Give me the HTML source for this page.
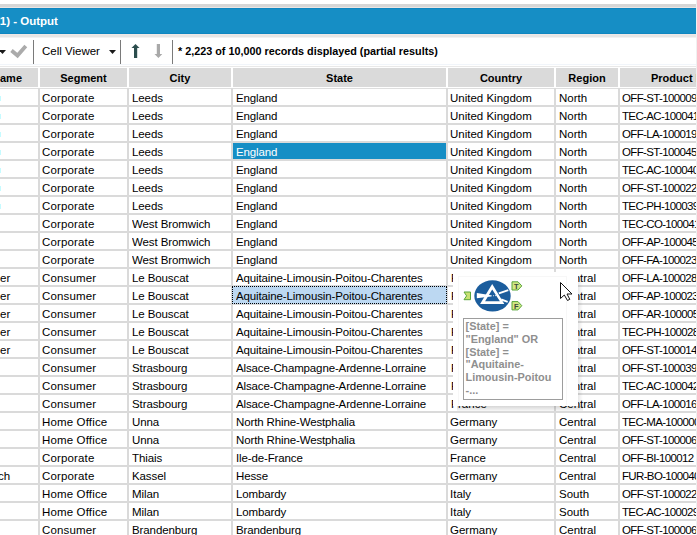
<!DOCTYPE html><html><head><meta charset="utf-8"><style>
*{margin:0;padding:0;box-sizing:border-box}
html,body{width:697px;height:535px;overflow:hidden;background:#fff}
body{position:relative;font-family:"Liberation Sans",sans-serif;color:#000}
.a{position:absolute}
.t{position:absolute;white-space:pre;font-size:11.5px;line-height:18px;height:18px}
.h{position:absolute;white-space:pre;font-size:11px;font-weight:bold;line-height:19px;height:19px;text-align:center;background:#dadada;overflow:hidden}
</style></head><body>

<div class="a" style="left:0;top:4px;width:696px;height:3px;background:#d6d6d6"></div>
<div class="a" style="left:0;top:7px;width:696px;height:1px;background:#ebe6e4"></div>
<div class="a" style="left:0;top:8px;width:696px;height:26px;background:#168ec5;border-top:1px solid #0f86c0;border-bottom:1px solid #0f86c0"></div>
<div class="a" style="left:0;top:34px;width:696px;height:1px;background:#eee8e6"></div>
<div class="a" style="left:0;top:35px;width:696px;height:2px;background:#e6e6e6"></div>
<div class="a" style="left:0;top:37px;width:696px;height:1px;background:#f2f2f2"></div>
<div class="a" style="left:-4px;top:8px;height:26px;line-height:26px;font-size:11.5px;font-weight:bold;color:#fff;white-space:pre">(1) - Output</div>
<div class="a" style="left:0;top:64px;width:696px;height:1px;background:#f1f5fa"></div>
<div class="a" style="left:0;top:66px;width:696px;height:1px;background:#e9e9e9"></div>
<div class="a" style="left:0;top:88px;width:696px;height:1px;background:#dedede"></div>
<div class="h" style="left:0;top:68px;width:38px"><span class="a" style="right:16px;top:1px">Customer Name</span></div>
<div class="h" style="left:40px;top:68px;width:87px;padding-top:1px">Segment</div>
<div class="h" style="left:129px;top:68px;width:102px;padding-top:1px">City</div>
<div class="h" style="left:233px;top:68px;width:213px;padding-top:1px">State</div>
<div class="h" style="left:448px;top:68px;width:106px;padding-top:1px">Country</div>
<div class="h" style="left:556px;top:68px;width:62px;padding-top:1px">Region</div>
<div class="h" style="left:620px;top:68px;width:76px;text-align:left"><span class="a" style="left:31px;top:1px">Product ID</span></div>
<div class="a" style="left:0;top:105px;width:696px;height:2px;background:#dadada"></div>
<div class="a" style="left:0;top:123px;width:696px;height:2px;background:#dadada"></div>
<div class="a" style="left:0;top:141px;width:696px;height:2px;background:#dadada"></div>
<div class="a" style="left:0;top:159px;width:696px;height:2px;background:#dadada"></div>
<div class="a" style="left:0;top:177px;width:696px;height:2px;background:#dadada"></div>
<div class="a" style="left:0;top:195px;width:696px;height:2px;background:#dadada"></div>
<div class="a" style="left:0;top:213px;width:696px;height:2px;background:#dadada"></div>
<div class="a" style="left:0;top:231px;width:696px;height:2px;background:#dadada"></div>
<div class="a" style="left:0;top:249px;width:696px;height:2px;background:#dadada"></div>
<div class="a" style="left:0;top:267px;width:696px;height:2px;background:#dadada"></div>
<div class="a" style="left:0;top:285px;width:696px;height:2px;background:#dadada"></div>
<div class="a" style="left:0;top:303px;width:696px;height:2px;background:#dadada"></div>
<div class="a" style="left:0;top:321px;width:696px;height:2px;background:#dadada"></div>
<div class="a" style="left:0;top:339px;width:696px;height:2px;background:#dadada"></div>
<div class="a" style="left:0;top:357px;width:696px;height:2px;background:#dadada"></div>
<div class="a" style="left:0;top:375px;width:696px;height:2px;background:#dadada"></div>
<div class="a" style="left:0;top:393px;width:696px;height:2px;background:#dadada"></div>
<div class="a" style="left:0;top:411px;width:696px;height:2px;background:#dadada"></div>
<div class="a" style="left:0;top:429px;width:696px;height:2px;background:#dadada"></div>
<div class="a" style="left:0;top:447px;width:696px;height:2px;background:#dadada"></div>
<div class="a" style="left:0;top:465px;width:696px;height:2px;background:#dadada"></div>
<div class="a" style="left:0;top:483px;width:696px;height:2px;background:#dadada"></div>
<div class="a" style="left:0;top:501px;width:696px;height:2px;background:#dadada"></div>
<div class="a" style="left:0;top:519px;width:696px;height:2px;background:#dadada"></div>
<div class="a" style="left:0;top:537px;width:696px;height:2px;background:#dadada"></div>
<div class="a" style="left:38px;top:88px;width:2px;height:447px;background:#dadada"></div>
<div class="a" style="left:127px;top:88px;width:2px;height:447px;background:#dadada"></div>
<div class="a" style="left:231px;top:88px;width:2px;height:447px;background:#dadada"></div>
<div class="a" style="left:446px;top:88px;width:2px;height:447px;background:#dadada"></div>
<div class="a" style="left:554px;top:88px;width:2px;height:447px;background:#dadada"></div>
<div class="a" style="left:618px;top:88px;width:2px;height:447px;background:#dadada"></div>
<div class="a" style="left:696px;top:0;width:1px;height:535px;background:#f0f0f0"></div>
<div class="a" style="left:0;top:96px;width:1px;height:5px;background:#c6fbff"></div>
<div class="a" style="left:0;top:114px;width:1px;height:5px;background:#c6fbff"></div>
<div class="a" style="left:0;top:132px;width:1px;height:5px;background:#c6fbff"></div>
<div class="a" style="left:0;top:150px;width:1px;height:5px;background:#c6fbff"></div>
<div class="a" style="left:0;top:168px;width:1px;height:5px;background:#c6fbff"></div>
<div class="a" style="left:0;top:186px;width:1px;height:5px;background:#c6fbff"></div>
<div class="a" style="left:0;top:204px;width:1px;height:5px;background:#c6fbff"></div>
<div class="a" style="left:233px;top:143px;width:213px;height:16px;background:#168ec5"></div>
<div class="a" style="left:232px;top:286px;width:215px;height:18px;background:#bcd8f2;border:1px dotted #000"></div>
<div class="t" style="left:42px;top:89px;width:85px;overflow:hidden;color:#000;letter-spacing:0.15px;">Corporate</div>
<div class="t" style="left:132px;top:89px;width:99px;overflow:hidden;color:#000;letter-spacing:-0.1px;">Leeds</div>
<div class="t" style="left:236px;top:89px;width:210px;overflow:hidden;color:#000;letter-spacing:-0.13px;">England</div>
<div class="t" style="left:450px;top:89px;width:104px;overflow:hidden;color:#000;">United Kingdom</div>
<div class="t" style="left:559px;top:89px;width:59px;overflow:hidden;color:#000;">North</div>
<div class="t" style="left:622px;top:89px;width:74px;overflow:hidden;color:#000;letter-spacing:-0.65px;">OFF-ST-100009</div>
<div class="t" style="left:42px;top:107px;width:85px;overflow:hidden;color:#000;letter-spacing:0.15px;">Corporate</div>
<div class="t" style="left:132px;top:107px;width:99px;overflow:hidden;color:#000;letter-spacing:-0.1px;">Leeds</div>
<div class="t" style="left:236px;top:107px;width:210px;overflow:hidden;color:#000;letter-spacing:-0.13px;">England</div>
<div class="t" style="left:450px;top:107px;width:104px;overflow:hidden;color:#000;">United Kingdom</div>
<div class="t" style="left:559px;top:107px;width:59px;overflow:hidden;color:#000;">North</div>
<div class="t" style="left:622px;top:107px;width:74px;overflow:hidden;color:#000;letter-spacing:-0.65px;">TEC-AC-100041</div>
<div class="t" style="left:42px;top:125px;width:85px;overflow:hidden;color:#000;letter-spacing:0.15px;">Corporate</div>
<div class="t" style="left:132px;top:125px;width:99px;overflow:hidden;color:#000;letter-spacing:-0.1px;">Leeds</div>
<div class="t" style="left:236px;top:125px;width:210px;overflow:hidden;color:#000;letter-spacing:-0.13px;">England</div>
<div class="t" style="left:450px;top:125px;width:104px;overflow:hidden;color:#000;">United Kingdom</div>
<div class="t" style="left:559px;top:125px;width:59px;overflow:hidden;color:#000;">North</div>
<div class="t" style="left:622px;top:125px;width:74px;overflow:hidden;color:#000;letter-spacing:-0.65px;">OFF-LA-100019</div>
<div class="t" style="left:42px;top:143px;width:85px;overflow:hidden;color:#000;letter-spacing:0.15px;">Corporate</div>
<div class="t" style="left:132px;top:143px;width:99px;overflow:hidden;color:#000;letter-spacing:-0.1px;">Leeds</div>
<div class="t" style="left:236px;top:143px;width:210px;overflow:hidden;color:#fff;letter-spacing:-0.13px;">England</div>
<div class="t" style="left:450px;top:143px;width:104px;overflow:hidden;color:#000;">United Kingdom</div>
<div class="t" style="left:559px;top:143px;width:59px;overflow:hidden;color:#000;">North</div>
<div class="t" style="left:622px;top:143px;width:74px;overflow:hidden;color:#000;letter-spacing:-0.65px;">OFF-ST-100045</div>
<div class="t" style="left:42px;top:161px;width:85px;overflow:hidden;color:#000;letter-spacing:0.15px;">Corporate</div>
<div class="t" style="left:132px;top:161px;width:99px;overflow:hidden;color:#000;letter-spacing:-0.1px;">Leeds</div>
<div class="t" style="left:236px;top:161px;width:210px;overflow:hidden;color:#000;letter-spacing:-0.13px;">England</div>
<div class="t" style="left:450px;top:161px;width:104px;overflow:hidden;color:#000;">United Kingdom</div>
<div class="t" style="left:559px;top:161px;width:59px;overflow:hidden;color:#000;">North</div>
<div class="t" style="left:622px;top:161px;width:74px;overflow:hidden;color:#000;letter-spacing:-0.65px;">TEC-AC-100040</div>
<div class="t" style="left:42px;top:179px;width:85px;overflow:hidden;color:#000;letter-spacing:0.15px;">Corporate</div>
<div class="t" style="left:132px;top:179px;width:99px;overflow:hidden;color:#000;letter-spacing:-0.1px;">Leeds</div>
<div class="t" style="left:236px;top:179px;width:210px;overflow:hidden;color:#000;letter-spacing:-0.13px;">England</div>
<div class="t" style="left:450px;top:179px;width:104px;overflow:hidden;color:#000;">United Kingdom</div>
<div class="t" style="left:559px;top:179px;width:59px;overflow:hidden;color:#000;">North</div>
<div class="t" style="left:622px;top:179px;width:74px;overflow:hidden;color:#000;letter-spacing:-0.65px;">OFF-ST-100022</div>
<div class="t" style="left:42px;top:197px;width:85px;overflow:hidden;color:#000;letter-spacing:0.15px;">Corporate</div>
<div class="t" style="left:132px;top:197px;width:99px;overflow:hidden;color:#000;letter-spacing:-0.1px;">Leeds</div>
<div class="t" style="left:236px;top:197px;width:210px;overflow:hidden;color:#000;letter-spacing:-0.13px;">England</div>
<div class="t" style="left:450px;top:197px;width:104px;overflow:hidden;color:#000;">United Kingdom</div>
<div class="t" style="left:559px;top:197px;width:59px;overflow:hidden;color:#000;">North</div>
<div class="t" style="left:622px;top:197px;width:74px;overflow:hidden;color:#000;letter-spacing:-0.65px;">TEC-PH-100039</div>
<div class="t" style="left:42px;top:215px;width:85px;overflow:hidden;color:#000;letter-spacing:0.15px;">Corporate</div>
<div class="t" style="left:132px;top:215px;width:99px;overflow:hidden;color:#000;letter-spacing:-0.1px;">West Bromwich</div>
<div class="t" style="left:236px;top:215px;width:210px;overflow:hidden;color:#000;letter-spacing:-0.13px;">England</div>
<div class="t" style="left:450px;top:215px;width:104px;overflow:hidden;color:#000;">United Kingdom</div>
<div class="t" style="left:559px;top:215px;width:59px;overflow:hidden;color:#000;">North</div>
<div class="t" style="left:622px;top:215px;width:74px;overflow:hidden;color:#000;letter-spacing:-0.65px;">TEC-CO-100041</div>
<div class="t" style="left:42px;top:233px;width:85px;overflow:hidden;color:#000;letter-spacing:0.15px;">Corporate</div>
<div class="t" style="left:132px;top:233px;width:99px;overflow:hidden;color:#000;letter-spacing:-0.1px;">West Bromwich</div>
<div class="t" style="left:236px;top:233px;width:210px;overflow:hidden;color:#000;letter-spacing:-0.13px;">England</div>
<div class="t" style="left:450px;top:233px;width:104px;overflow:hidden;color:#000;">United Kingdom</div>
<div class="t" style="left:559px;top:233px;width:59px;overflow:hidden;color:#000;">North</div>
<div class="t" style="left:622px;top:233px;width:74px;overflow:hidden;color:#000;letter-spacing:-0.65px;">OFF-AP-100045</div>
<div class="t" style="left:42px;top:251px;width:85px;overflow:hidden;color:#000;letter-spacing:0.15px;">Corporate</div>
<div class="t" style="left:132px;top:251px;width:99px;overflow:hidden;color:#000;letter-spacing:-0.1px;">West Bromwich</div>
<div class="t" style="left:236px;top:251px;width:210px;overflow:hidden;color:#000;letter-spacing:-0.13px;">England</div>
<div class="t" style="left:450px;top:251px;width:104px;overflow:hidden;color:#000;">United Kingdom</div>
<div class="t" style="left:559px;top:251px;width:59px;overflow:hidden;color:#000;">North</div>
<div class="t" style="left:622px;top:251px;width:74px;overflow:hidden;color:#000;letter-spacing:-0.65px;">OFF-FA-100023</div>
<div class="t" style="left:0px;top:269px;color:#000">er</div>
<div class="t" style="left:42px;top:269px;width:85px;overflow:hidden;color:#000;letter-spacing:0.15px;">Consumer</div>
<div class="t" style="left:132px;top:269px;width:99px;overflow:hidden;color:#000;letter-spacing:-0.1px;">Le Bouscat</div>
<div class="t" style="left:236px;top:269px;width:210px;overflow:hidden;color:#000;letter-spacing:-0.13px;">Aquitaine-Limousin-Poitou-Charentes</div>
<div class="t" style="left:451px;top:269px;width:104px;overflow:hidden;color:#000;">France</div>
<div class="t" style="left:559px;top:269px;width:59px;overflow:hidden;color:#000;">Central</div>
<div class="t" style="left:622px;top:269px;width:74px;overflow:hidden;color:#000;letter-spacing:-0.65px;">OFF-LA-100028</div>
<div class="t" style="left:0px;top:287px;color:#000">er</div>
<div class="t" style="left:42px;top:287px;width:85px;overflow:hidden;color:#000;letter-spacing:0.15px;">Consumer</div>
<div class="t" style="left:132px;top:287px;width:99px;overflow:hidden;color:#000;letter-spacing:-0.1px;">Le Bouscat</div>
<div class="t" style="left:236px;top:287px;width:210px;overflow:hidden;color:#000;letter-spacing:-0.13px;">Aquitaine-Limousin-Poitou-Charentes</div>
<div class="t" style="left:451px;top:287px;width:104px;overflow:hidden;color:#000;">France</div>
<div class="t" style="left:559px;top:287px;width:59px;overflow:hidden;color:#000;">Central</div>
<div class="t" style="left:622px;top:287px;width:74px;overflow:hidden;color:#000;letter-spacing:-0.65px;">OFF-AP-100023</div>
<div class="t" style="left:0px;top:305px;color:#000">er</div>
<div class="t" style="left:42px;top:305px;width:85px;overflow:hidden;color:#000;letter-spacing:0.15px;">Consumer</div>
<div class="t" style="left:132px;top:305px;width:99px;overflow:hidden;color:#000;letter-spacing:-0.1px;">Le Bouscat</div>
<div class="t" style="left:236px;top:305px;width:210px;overflow:hidden;color:#000;letter-spacing:-0.13px;">Aquitaine-Limousin-Poitou-Charentes</div>
<div class="t" style="left:451px;top:305px;width:104px;overflow:hidden;color:#000;">France</div>
<div class="t" style="left:559px;top:305px;width:59px;overflow:hidden;color:#000;">Central</div>
<div class="t" style="left:622px;top:305px;width:74px;overflow:hidden;color:#000;letter-spacing:-0.65px;">OFF-AR-100005</div>
<div class="t" style="left:0px;top:323px;color:#000">er</div>
<div class="t" style="left:42px;top:323px;width:85px;overflow:hidden;color:#000;letter-spacing:0.15px;">Consumer</div>
<div class="t" style="left:132px;top:323px;width:99px;overflow:hidden;color:#000;letter-spacing:-0.1px;">Le Bouscat</div>
<div class="t" style="left:236px;top:323px;width:210px;overflow:hidden;color:#000;letter-spacing:-0.13px;">Aquitaine-Limousin-Poitou-Charentes</div>
<div class="t" style="left:451px;top:323px;width:104px;overflow:hidden;color:#000;">France</div>
<div class="t" style="left:559px;top:323px;width:59px;overflow:hidden;color:#000;">Central</div>
<div class="t" style="left:622px;top:323px;width:74px;overflow:hidden;color:#000;letter-spacing:-0.65px;">TEC-PH-100028</div>
<div class="t" style="left:0px;top:341px;color:#000">er</div>
<div class="t" style="left:42px;top:341px;width:85px;overflow:hidden;color:#000;letter-spacing:0.15px;">Consumer</div>
<div class="t" style="left:132px;top:341px;width:99px;overflow:hidden;color:#000;letter-spacing:-0.1px;">Le Bouscat</div>
<div class="t" style="left:236px;top:341px;width:210px;overflow:hidden;color:#000;letter-spacing:-0.13px;">Aquitaine-Limousin-Poitou-Charentes</div>
<div class="t" style="left:451px;top:341px;width:104px;overflow:hidden;color:#000;">France</div>
<div class="t" style="left:559px;top:341px;width:59px;overflow:hidden;color:#000;">Central</div>
<div class="t" style="left:622px;top:341px;width:74px;overflow:hidden;color:#000;letter-spacing:-0.65px;">OFF-ST-100014</div>
<div class="t" style="left:42px;top:359px;width:85px;overflow:hidden;color:#000;letter-spacing:0.15px;">Consumer</div>
<div class="t" style="left:132px;top:359px;width:99px;overflow:hidden;color:#000;letter-spacing:-0.1px;">Strasbourg</div>
<div class="t" style="left:236px;top:359px;width:210px;overflow:hidden;color:#000;letter-spacing:-0.13px;">Alsace-Champagne-Ardenne-Lorraine</div>
<div class="t" style="left:451px;top:359px;width:104px;overflow:hidden;color:#000;">France</div>
<div class="t" style="left:559px;top:359px;width:59px;overflow:hidden;color:#000;">Central</div>
<div class="t" style="left:622px;top:359px;width:74px;overflow:hidden;color:#000;letter-spacing:-0.65px;">OFF-ST-100039</div>
<div class="t" style="left:42px;top:377px;width:85px;overflow:hidden;color:#000;letter-spacing:0.15px;">Consumer</div>
<div class="t" style="left:132px;top:377px;width:99px;overflow:hidden;color:#000;letter-spacing:-0.1px;">Strasbourg</div>
<div class="t" style="left:236px;top:377px;width:210px;overflow:hidden;color:#000;letter-spacing:-0.13px;">Alsace-Champagne-Ardenne-Lorraine</div>
<div class="t" style="left:451px;top:377px;width:104px;overflow:hidden;color:#000;">France</div>
<div class="t" style="left:559px;top:377px;width:59px;overflow:hidden;color:#000;">Central</div>
<div class="t" style="left:622px;top:377px;width:74px;overflow:hidden;color:#000;letter-spacing:-0.65px;">TEC-AC-100042</div>
<div class="t" style="left:42px;top:395px;width:85px;overflow:hidden;color:#000;letter-spacing:0.15px;">Consumer</div>
<div class="t" style="left:132px;top:395px;width:99px;overflow:hidden;color:#000;letter-spacing:-0.1px;">Strasbourg</div>
<div class="t" style="left:236px;top:395px;width:210px;overflow:hidden;color:#000;letter-spacing:-0.13px;">Alsace-Champagne-Ardenne-Lorraine</div>
<div class="t" style="left:451px;top:395px;width:104px;overflow:hidden;color:#000;">France</div>
<div class="t" style="left:559px;top:395px;width:59px;overflow:hidden;color:#000;">Central</div>
<div class="t" style="left:622px;top:395px;width:74px;overflow:hidden;color:#000;letter-spacing:-0.65px;">OFF-LA-100016</div>
<div class="t" style="left:42px;top:413px;width:85px;overflow:hidden;color:#000;letter-spacing:0.15px;">Home Office</div>
<div class="t" style="left:132px;top:413px;width:99px;overflow:hidden;color:#000;letter-spacing:-0.1px;">Unna</div>
<div class="t" style="left:236px;top:413px;width:210px;overflow:hidden;color:#000;letter-spacing:-0.13px;">North Rhine-Westphalia</div>
<div class="t" style="left:450px;top:413px;width:104px;overflow:hidden;color:#000;">Germany</div>
<div class="t" style="left:559px;top:413px;width:59px;overflow:hidden;color:#000;">Central</div>
<div class="t" style="left:622px;top:413px;width:74px;overflow:hidden;color:#000;letter-spacing:-0.65px;">TEC-MA-100000</div>
<div class="t" style="left:42px;top:431px;width:85px;overflow:hidden;color:#000;letter-spacing:0.15px;">Home Office</div>
<div class="t" style="left:132px;top:431px;width:99px;overflow:hidden;color:#000;letter-spacing:-0.1px;">Unna</div>
<div class="t" style="left:236px;top:431px;width:210px;overflow:hidden;color:#000;letter-spacing:-0.13px;">North Rhine-Westphalia</div>
<div class="t" style="left:450px;top:431px;width:104px;overflow:hidden;color:#000;">Germany</div>
<div class="t" style="left:559px;top:431px;width:59px;overflow:hidden;color:#000;">Central</div>
<div class="t" style="left:622px;top:431px;width:74px;overflow:hidden;color:#000;letter-spacing:-0.65px;">OFF-ST-100006</div>
<div class="t" style="left:42px;top:449px;width:85px;overflow:hidden;color:#000;letter-spacing:0.15px;">Corporate</div>
<div class="t" style="left:132px;top:449px;width:99px;overflow:hidden;color:#000;letter-spacing:-0.1px;">Thiais</div>
<div class="t" style="left:236px;top:449px;width:210px;overflow:hidden;color:#000;letter-spacing:-0.13px;">Ile-de-France</div>
<div class="t" style="left:450px;top:449px;width:104px;overflow:hidden;color:#000;">France</div>
<div class="t" style="left:559px;top:449px;width:59px;overflow:hidden;color:#000;">Central</div>
<div class="t" style="left:622px;top:449px;width:74px;overflow:hidden;color:#000;letter-spacing:-0.65px;">OFF-BI-100012</div>
<div class="t" style="left:-2px;top:467px;color:#000">ch</div>
<div class="t" style="left:42px;top:467px;width:85px;overflow:hidden;color:#000;letter-spacing:0.15px;">Corporate</div>
<div class="t" style="left:132px;top:467px;width:99px;overflow:hidden;color:#000;letter-spacing:-0.1px;">Kassel</div>
<div class="t" style="left:236px;top:467px;width:210px;overflow:hidden;color:#000;letter-spacing:-0.13px;">Hesse</div>
<div class="t" style="left:450px;top:467px;width:104px;overflow:hidden;color:#000;">Germany</div>
<div class="t" style="left:559px;top:467px;width:59px;overflow:hidden;color:#000;">Central</div>
<div class="t" style="left:622px;top:467px;width:74px;overflow:hidden;color:#000;letter-spacing:-0.65px;">FUR-BO-100040</div>
<div class="t" style="left:42px;top:485px;width:85px;overflow:hidden;color:#000;letter-spacing:0.15px;">Home Office</div>
<div class="t" style="left:132px;top:485px;width:99px;overflow:hidden;color:#000;letter-spacing:-0.1px;">Milan</div>
<div class="t" style="left:236px;top:485px;width:210px;overflow:hidden;color:#000;letter-spacing:-0.13px;">Lombardy</div>
<div class="t" style="left:450px;top:485px;width:104px;overflow:hidden;color:#000;">Italy</div>
<div class="t" style="left:559px;top:485px;width:59px;overflow:hidden;color:#000;">South</div>
<div class="t" style="left:622px;top:485px;width:74px;overflow:hidden;color:#000;letter-spacing:-0.65px;">OFF-ST-100022</div>
<div class="t" style="left:42px;top:503px;width:85px;overflow:hidden;color:#000;letter-spacing:0.15px;">Home Office</div>
<div class="t" style="left:132px;top:503px;width:99px;overflow:hidden;color:#000;letter-spacing:-0.1px;">Milan</div>
<div class="t" style="left:236px;top:503px;width:210px;overflow:hidden;color:#000;letter-spacing:-0.13px;">Lombardy</div>
<div class="t" style="left:450px;top:503px;width:104px;overflow:hidden;color:#000;">Italy</div>
<div class="t" style="left:559px;top:503px;width:59px;overflow:hidden;color:#000;">South</div>
<div class="t" style="left:622px;top:503px;width:74px;overflow:hidden;color:#000;letter-spacing:-0.65px;">TEC-AC-100029</div>
<div class="t" style="left:42px;top:521px;width:85px;overflow:hidden;color:#000;letter-spacing:0.15px;">Consumer</div>
<div class="t" style="left:132px;top:521px;width:99px;overflow:hidden;color:#000;letter-spacing:-0.1px;">Brandenburg</div>
<div class="t" style="left:236px;top:521px;width:210px;overflow:hidden;color:#000;letter-spacing:-0.13px;">Brandenburg</div>
<div class="t" style="left:450px;top:521px;width:104px;overflow:hidden;color:#000;">Germany</div>
<div class="t" style="left:559px;top:521px;width:59px;overflow:hidden;color:#000;">Central</div>
<div class="t" style="left:622px;top:521px;width:74px;overflow:hidden;color:#000;letter-spacing:-0.65px;">OFF-ST-100006</div>
<svg class="a" style="left:0;top:38px" width="200" height="26" viewBox="0 38 200 26"><path d="M-1 50 L6 50 L2.5 54 Z" fill="#1a1a1a"/><path d="M11.5 50.5 L17.5 55.5 L25.8 46" fill="none" stroke="#ababab" stroke-width="3.8" stroke-linejoin="miter"/><rect x="33" y="40" width="1" height="24" fill="#7a7a7a"/><path d="M109 50 L116 50 L112.5 54 Z" fill="#1a1a1a"/><rect x="120" y="40" width="1" height="24" fill="#7a7a7a"/><path d="M135.5 44 L139.5 48 L137.2 48 L137.2 58 L134 58 L134 48 L131.5 48 Z" fill="#2b4d4d"/><path d="M156.8 44 L160 44 L160 54 L162.3 54 L158.4 58 L154.5 54 L156.8 54 Z" fill="#a9a9a9"/><rect x="172" y="40" width="1" height="24" fill="#7a7a7a"/></svg>
<div class="a" style="left:42px;top:44px;font-size:11.5px;line-height:14px;white-space:pre">Cell Viewer</div>
<div class="a" style="left:178px;top:44px;font-size:10.8px;font-weight:bold;line-height:14px;white-space:pre">* 2,223 of 10,000 records displayed (partial results)</div>
<div class="a" style="left:453px;top:272px;width:125px;height:134px;background:#fff"></div>
<div class="a" style="left:578px;top:276px;width:5px;height:130px;background:linear-gradient(to right,rgba(0,0,0,0.09),rgba(0,0,0,0))"></div>
<div class="a" style="left:457px;top:406px;width:126px;height:5px;background:linear-gradient(to bottom,rgba(0,0,0,0.16),rgba(0,0,0,0.03))"></div>
<div class="a" style="left:458px;top:276px;width:109px;height:129px;border:1px solid #f7f7f7;border-bottom:none"></div>
<svg class="a" style="left:453px;top:272px" width="125" height="134" viewBox="453 272 125 134"><ellipse cx="492.5" cy="295.9" rx="18.2" ry="15.6" fill="#1b5d9d"/><path d="M492.2 284.1 L504.3 303.9 L480.1 303.9 Z M492.2 289.4 L485.1 301.2 L499.9 301.2 Z" fill="#fff" fill-rule="evenodd"/><path d="M476.8 293 L491 295.3 L491 296.6 L476.8 298.3 Z" fill="#fff"/><path d="M491 295.9 L497 295.5" stroke="#fff" stroke-width="0.8" stroke-dasharray="1 1"/><path d="M498.5 292.5 L508 289.2 L508.6 291 L499.2 294.2 Z" fill="#fff"/><path d="M501.5 298.6 L508 301 L507.4 302.8 L501 300.4 Z" fill="#fff"/><path d="M464 292 L470.5 292 L470.5 299.7 L464 299.7 L466.6 295.85 Z" fill="#c9e172" stroke="#58a63b" stroke-width="1"/><path d="M512 281.8 L518 281.8 L521.8 285.9 L518 290 L512 290 Z" fill="#d3e785" stroke="#58a63b" stroke-width="1"/><path d="M512 301.6 L518 301.6 L521.8 305.7 L518 309.9 L512 309.9 Z" fill="#d3e785" stroke="#58a63b" stroke-width="1"/><text x="514" y="289" font-family="Liberation Sans" font-weight="bold" font-size="7.5" fill="#3b4a3a">T</text><text x="514" y="308.8" font-family="Liberation Sans" font-weight="bold" font-size="7.5" fill="#3b4a3a">F</text></svg>
<div class="a" style="left:463px;top:318px;width:100px;height:82px;border:1px solid #9d9d9d;background:#fff"></div>
<div class="a" style="left:465.5px;top:320px;font-size:10.9px;font-weight:bold;line-height:12.75px;color:#8f8f8f;white-space:pre">[State] =
"England" OR
[State] =
"Aquitaine-
Limousin-Poitou
-...</div>
<svg class="a" style="left:555px;top:278px" width="25" height="25" viewBox="555 278 25 25"><path d="M560.5 282.5 L560.5 298.5 L564.3 295 L567.5 300.5 L569.8 299.3 L567 294 L572 294 Z" fill="#fff" stroke="#111" stroke-width="1" stroke-linejoin="miter"/></svg>
</body></html>
